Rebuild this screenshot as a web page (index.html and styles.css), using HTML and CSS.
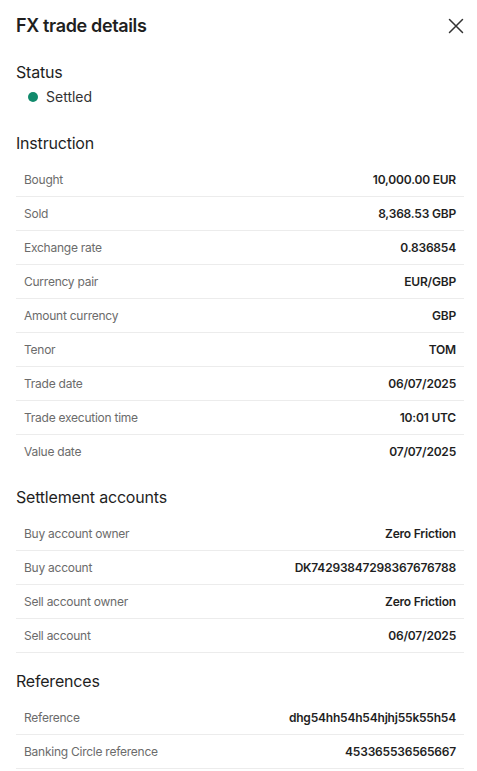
FILE: index.html
```html
<!DOCTYPE html>
<html>
<head>
<meta charset="utf-8">
<link rel="stylesheet" href="styles.css">
</head>
<body>
<div class="panel">
  <header class="header">
    <h1 class="title">FX trade details</h1>
    <button class="close" aria-label="Close">
      <svg width="16" height="16" viewBox="0 0 16 16"><path d="M1.5 1.5L14.5 14.5M14.5 1.5L1.5 14.5" stroke="#333" stroke-width="1.5" fill="none" stroke-linecap="round"/></svg>
    </button>
  </header>

  <section class="status">
    <h2 class="heading">Status</h2>
    <div class="status-row"><span class="dot"></span><span>Settled</span></div>
  </section>

  <section class="section">
    <h2 class="heading">Instruction</h2>
    <div class="rows no-last-border">
      <div class="row"><span class="label">Bought</span><span class="value">10,000.00 EUR</span></div>
      <div class="row"><span class="label">Sold</span><span class="value">8,368.53 GBP</span></div>
      <div class="row"><span class="label">Exchange rate</span><span class="value">0.836854</span></div>
      <div class="row"><span class="label">Currency pair</span><span class="value">EUR/GBP</span></div>
      <div class="row"><span class="label">Amount currency</span><span class="value">GBP</span></div>
      <div class="row"><span class="label">Tenor</span><span class="value">TOM</span></div>
      <div class="row"><span class="label">Trade date</span><span class="value">06/07/2025</span></div>
      <div class="row"><span class="label">Trade execution time</span><span class="value">10:01 UTC</span></div>
      <div class="row"><span class="label">Value date</span><span class="value">07/07/2025</span></div>
    </div>
  </section>

  <section class="section">
    <h2 class="heading">Settlement accounts</h2>
    <div class="rows">
      <div class="row"><span class="label">Buy account owner</span><span class="value">Zero Friction</span></div>
      <div class="row"><span class="label">Buy account</span><span class="value">DK74293847298367676788</span></div>
      <div class="row"><span class="label">Sell account owner</span><span class="value">Zero Friction</span></div>
      <div class="row"><span class="label">Sell account</span><span class="value">06/07/2025</span></div>
    </div>
  </section>

  <section class="section">
    <h2 class="heading">References</h2>
    <div class="rows">
      <div class="row"><span class="label">Reference</span><span class="value">dhg54hh54h54hjhj55k55h54</span></div>
      <div class="row"><span class="label">Banking Circle reference</span><span class="value">453365536565667</span></div>
    </div>
  </section>
</div>
</body>
</html>
```
FILE: styles.css
```css
* { box-sizing: border-box; }
html, body { margin: 0; padding: 0; background: #fff; }
body {
  font-family: Inter, "Noto Sans", sans-serif;
  color: #1f1f1f;
  overflow: hidden;
}
.panel {
  padding: 14px 13px 0 16px;
  display: flex;
  flex-direction: column;
}
.header {
  display: flex;
  justify-content: space-between;
  align-items: center;
  height: 24px;
}
.title {
  margin: 0;
  font-size: 18px;
  line-height: 24px;
  font-weight: 600;
  color: #1f1f1f;
  letter-spacing: -0.35px;
}
.close {
  border: none;
  background: none;
  padding: 0;
  width: 16px;
  height: 16px;
  display: flex;
  cursor: pointer;
}
.heading {
  margin: 0;
  font-size: 16px;
  line-height: 24px;
  font-weight: 400;
  color: #1f1f1f;
  letter-spacing: -0.2px;
}
.status {
  margin-top: 22px;
}
.status-row {
  display: flex;
  align-items: center;
  gap: 8px;
  margin-top: 3px;
  padding-left: 12px;
  font-size: 14px;
  line-height: 20px;
  color: #333;
}
.dot {
  width: 10px;
  height: 10px;
  border-radius: 50%;
  background: #118a6c;
}
.section {
  margin-top: 24px;
}
.section + .section { margin-top: 16px; }
.rows {
  margin-top: 8px;
  width: 448px;
}
.row {
  display: flex;
  justify-content: space-between;
  align-items: center;
  height: 34px;
  padding: 0 8px;
  border-bottom: 1px solid #ececec;
  font-size: 12px;
}
.no-last-border .row:last-child { border-bottom-color: transparent; }
.label { color: #6b6b6b; letter-spacing: -0.25px; }
.value { font-weight: 600; color: #1f1f1f; letter-spacing: -0.2px; }
```
